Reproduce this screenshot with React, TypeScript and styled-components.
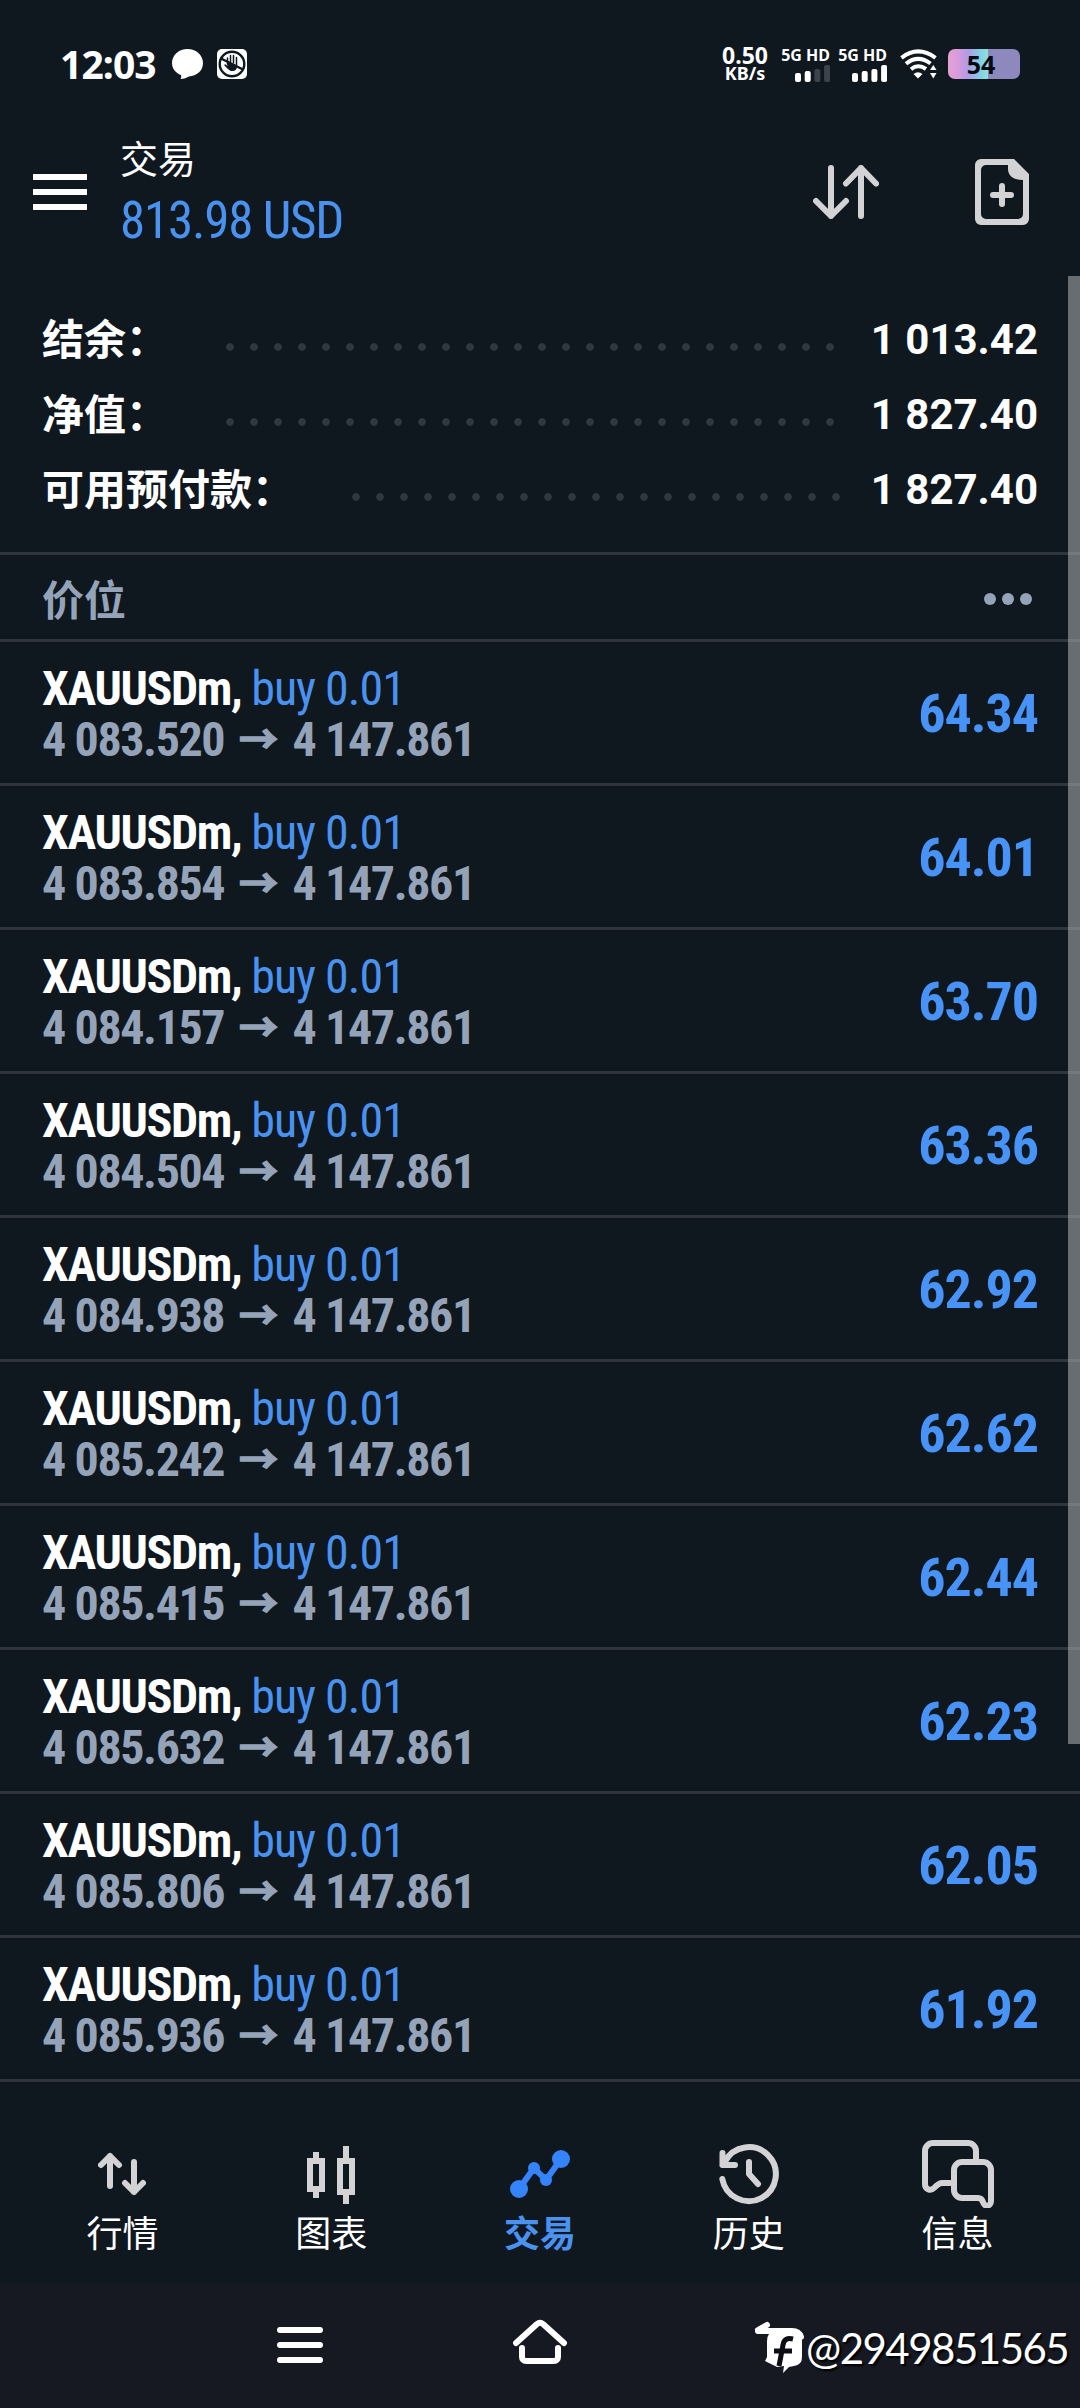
import React from 'react';
import styled, { createGlobalStyle } from 'styled-components';

const GlobalStyle = createGlobalStyle`
  * { box-sizing: border-box; }
  body {
    margin: 0;
    background: #0f171f;
    font-family: Roboto, "Noto Sans CJK SC", sans-serif;
    color: #fff;
  }
  svg { display: block; flex: none; }
`;

const Screen = styled.div`
  width: 1080px;
  height: 2408px;
  display: flex;
  flex-direction: column;
  overflow: hidden;
  background: #0f171f;
`;

const StatusBar = styled.div`
  height: 128px;
  padding: 0 60px 0 61px;
  display: flex;
  align-items: center;
  font-family: "Noto Sans", sans-serif;
`;

const Clock = styled.span`
  width: 111px;
  font-size: 39px;
  font-weight: 700;
  line-height: 56px;
  letter-spacing: -0.9px;
  margin-left: -1px;
  margin-right: 1px;
`;

const NoticeIcons = styled.div`
  display: flex;
  gap: 14px;
  flex: 1;
`;

const Speed = styled.div`
  width: 52px;
  margin-right: 2px;
  display: flex;
  flex-direction: column;
  align-items: center;
  font-weight: 700;
`;

const SpeedLine = styled.span<{ $size: number }>`
  font-size: ${(p) => p.$size}px;
  line-height: 18px;
`;

const Signal = styled.div`
  width: 48px;
  margin-left: 9px;
  display: flex;
  flex-direction: column;
  align-items: flex-end;
  gap: 1px;
  font-size: 16px;
  font-weight: 700;
  line-height: 17px;
  white-space: nowrap;
`;

const WifiSlot = styled.div`
  margin: 0 11px 0 13px;
`;

const Battery = styled.div`
  width: 72px;
  height: 30px;
  border-radius: 7px;
  padding-right: 6px;
  text-align: center;
  color: #060a12;
  font-size: 25px;
  font-weight: 700;
  line-height: 30px;
  background: linear-gradient(90deg, #e3a3cf 0, #dd9bdc 8px, #b09be6 20px, #84cfe2 32px, #8be3dc 40px, #8d89bd 40px);
`;

const Header = styled.header`
  height: 148px;
  padding: 0 51px 0 33px;
  display: flex;
  align-items: flex-start;
`;

const MenuButton = styled.div`
  width: 54px;
  margin-top: 46px;
  display: flex;
  flex-direction: column;
  gap: 9px;
`;

const MenuBar = styled.span`
  height: 6px;
  background: #fff;
`;

const Titles = styled.div`
  flex: 1;
  margin: 9px 0 0 33px;
`;

const Title = styled.div`
  font-size: 38px;
  line-height: 46px;
`;

const Profit = styled.div`
  margin-top: 7px;
  font-family: "Roboto Condensed", Roboto, sans-serif;
  font-stretch: 75%;
  font-size: 51px;
  line-height: 62px;
  letter-spacing: -1.2px;
  color: #4a92f0;
`;

const SortSlot = styled.div`
  margin: 37px 96px 0 0;
`;

const DocSlot = styled.div`
  margin-top: 31px;
`;

const Content = styled.main`
  position: relative;
  height: 1838px;
`;

const ScrollThumb = styled.div`
  position: absolute;
  top: 0;
  right: 0;
  width: 12px;
  height: 1468px;
  background: rgba(164, 166, 168, 0.6);
`;

const Summary = styled.section`
  height: 279px;
  padding: 26px 42px 0;
  border-bottom: 3px solid #2e353f;
`;

const SummaryRow = styled.div`
  height: 75px;
  display: flex;
  align-items: center;
  font-size: 42px;
  font-weight: 700;
`;

const Label = styled.span`
  margin-bottom: 6px;
`;

const Leader = styled.div`
  flex: 1;
  height: 8px;
  margin: 15px 23px 0 50px;
  background: radial-gradient(circle at 12px 4px, #2f3740 3.4px, transparent 4.2px) 0 0 / 24px 8px repeat-x;
`;

const SectionHead = styled.div`
  height: 87px;
  padding: 0 48px 0 42px;
  display: flex;
  align-items: center;
  justify-content: space-between;
  border-bottom: 3px solid #2e353f;
  color: #94a3b8;
  font-size: 42px;
  font-weight: 700;
`;

const More = styled.div`
  display: flex;
  gap: 6px;
  margin-top: 4px;
`;

const MoreDot = styled.span`
  width: 12px;
  height: 12px;
  border-radius: 50%;
  background: #94a3b8;
`;

const PositionRow = styled.div`
  height: 144px;
  padding: 21px 42px 0;
  display: flex;
  justify-content: space-between;
  border-bottom: 3px solid #2e353f;
  font-family: "Roboto Condensed", Roboto, sans-serif;
  font-stretch: 75%;
`;

const Line = styled.div`
  height: 51px;
  line-height: 51px;
  font-size: 48px;
  font-weight: 700;
  letter-spacing: -1.35px;
  white-space: nowrap;
`;

const Side = styled.span`
  font-weight: 400;
  letter-spacing: -1px;
  color: #4a92f0;
`;

const Prices = styled(Line)`
  letter-spacing: -1.4px;
  color: #94a3b8;
`;

const Arrow = styled.span`
  margin: 0 5px;
  font-family: "Noto Sans CJK SC", sans-serif;
  font-size: 39px;
  line-height: 0;
  letter-spacing: 0;
  vertical-align: 3px;
  -webkit-text-stroke: 1.5px #94a3b8;
`;

const Gain = styled.div`
  font-size: 54px;
  font-weight: 700;
  line-height: 101px;
  letter-spacing: -1px;
  color: #4793f8;
`;

const TabBar = styled.nav`
  height: 169px;
  padding: 26px 18px 0;
  display: flex;
`;

const Tab = styled.div<{ $active?: boolean }>`
  flex: 1;
  display: flex;
  flex-direction: column;
  align-items: center;
  gap: 4px;
  font-size: 36px;
  line-height: 46px;
  font-weight: ${(p) => (p.$active ? 700 : 400)};
  color: ${(p) => (p.$active ? '#4a92f0' : '#fff')};
`;

const SystemBar = styled.div`
  flex: 1;
  padding: 32px 0 0 277px;
  display: flex;
  align-items: flex-start;
  background: #171922;
`;

const Recents = styled.div`
  flex: none;
  width: 46px;
  margin: 12px 190px 0 0;
  display: flex;
  flex-direction: column;
  gap: 9px;
`;

const RecentsBar = styled.span`
  height: 6px;
  border-radius: 3px;
  background: #fff;
`;

const BadgeSlot = styled.div`
  margin: 4px 0 0 185px;
`;

const Handle = styled.span`
  margin-top: 7px;
  font-family: Lato, sans-serif;
  font-size: 42px;
  line-height: 52px;
  letter-spacing: -1.5px;
  text-shadow: 2px 2px 2px #000;
`;

const summary = [
  { label: '结余：', value: '1 013.42' },
  { label: '净值：', value: '1 827.40' },
  { label: '可用预付款：', value: '1 827.40' },
];

const positions = [
  { open: '4 083.520', gain: '64.34' },
  { open: '4 083.854', gain: '64.01' },
  { open: '4 084.157', gain: '63.70' },
  { open: '4 084.504', gain: '63.36' },
  { open: '4 084.938', gain: '62.92' },
  { open: '4 085.242', gain: '62.62' },
  { open: '4 085.415', gain: '62.44' },
  { open: '4 085.632', gain: '62.23' },
  { open: '4 085.806', gain: '62.05' },
  { open: '4 085.936', gain: '61.92' },
];

const line = {
  fill: 'none',
  stroke: '#d3d3d5',
  strokeWidth: 6,
  strokeLinecap: 'round' as const,
  strokeLinejoin: 'round' as const,
};

const ChatIcon = () => (
  <svg width="31" height="30" viewBox="0 0 31 30">
    <path d="M15.500 0C24 0 31 6 31 14s-6.500 13-14 13.500c-2 1-5 2.500-8.500 2.500.5-1 1-2.500.5-4C3.500 24 0 19.500 0 14 0 6 7 0 15.500 0Z" fill="#fff" />
  </svg>
);

const HandIcon = () => (
  <svg width="30" height="30" viewBox="0 0 30 30">
    <rect width="30" height="30" rx="5" fill="#fff" />
    <circle cx="15" cy="15" r="12.300" fill="none" stroke="#0f171f" strokeWidth="2.400" />
    <path d="M10.500 15V9M13.500 14V6.500M16.500 14V6.500M19.500 16V8.500" fill="none" stroke="#0f171f" strokeWidth="1.500" strokeLinecap="round" />
    <path d="M10 13l10 4.500c0 3-2 4.500-4.500 4.500-3 0-4.500-2-8.500-6 1.500-1 2.500 0 3.500 1Z" fill="#0f171f" />
    <path d="M4 9.500l22 11" stroke="#0f171f" strokeWidth="2.400" />
  </svg>
);

const Bars = ({ level }: { level: number }) => (
  <svg width="35" height="17" viewBox="0 0 35 17">
    {[9, 11, 13, 17].map((h, i) => (
      <rect key={h} x={i * 9.7} y={17 - h} width="6" height={h} rx="2" fill={i < level ? '#fff' : '#3c434b'} />
    ))}
  </svg>
);

const WifiIcon = () => (
  <svg width="37" height="30" viewBox="0 0 37 30">
    <g fill="none" stroke="#fff" strokeWidth="4">
      <path d="M1.500 8.800Q18 -4 35.500 8.800" />
      <path d="M6 14.800Q18 5 30.500 14.500" />
      <path d="M11 20.300Q18 14.500 26 20" />
    </g>
    <path d="M13.500 25q4.500-3.500 9 0l-4.500 4.500Z" fill="#fff" />
    <path d="M30 21l3.300-5 3.200 5ZM30 24h6.500l-3.200 5.500Z" fill="#fff" />
  </svg>
);

const SortIcon = () => (
  <svg width="66" height="54" viewBox="0 0 66 54">
    <path {...line} d="M18 3V51M3 36L18 51L33 36M48 51V3M33 18.500L48 3L63 18.500" />
  </svg>
);

const NewOrderIcon = () => (
  <svg width="54" height="66" viewBox="0 0 54 66">
    <path
      fillRule="evenodd"
      fill="#d3d3d5"
      d="M6 0H39L54 15V60a6 6 0 0 1-6 6H6a6 6 0 0 1-6-6V6a6 6 0 0 1 6-6ZM11 6a5 5 0 0 0-5 5V55a5 5 0 0 0 5 5H43a5 5 0 0 0 5-5V21C39 21 33 17 33 10V6Z"
    />
    <path {...line} d="M27 27V45M18 36H36" />
  </svg>
);

const QuotesIcon = () => (
  <svg width="48" height="68" viewBox="0 0 48 68">
    <path {...line} d="M12 46V16M3 25L12 16L21 25M36 22V52M27 43L36 52L45 43" />
  </svg>
);

const ChartIcon = () => (
  <svg width="48" height="68" viewBox="0 0 48 68">
    <g {...line} strokeLinecap="butt" strokeLinejoin="miter">
      <path d="M3 21H15V49H3ZM9 12V18M9 52V58" />
      <path d="M33 21H45V52H33ZM39 6V18M39 55V64" />
    </g>
  </svg>
);

const TradeIcon = () => (
  <svg width="60" height="68" viewBox="0 0 60 68">
    <path {...line} stroke="#3584fb" d="M9 49L24 28L36 40L51 19" />
    <g fill="#3584fb">
      <circle cx="9" cy="49" r="9" />
      <circle cx="24" cy="28" r="6" />
      <circle cx="36" cy="40" r="6" />
      <circle cx="51" cy="19" r="9" />
    </g>
  </svg>
);

const HistoryIcon = () => (
  <svg width="60" height="68" viewBox="0 0 60 68">
    <path {...line} d="M3.300 39A27 27 0 1 0 6 21.500L3.500 25H16M3.500 13V25M30 22V34L39 44" />
  </svg>
);

const MessagesIcon = () => (
  <svg width="72" height="68" viewBox="0 0 72 68">
    <g {...line}>
      <path d="M54 19V11a8 8 0 0 0-8-8H11a8 8 0 0 0-8 8V44C3 50 9 51 12 48C15 45 17 43 20 43H28" />
      <path d="M41 22H61a8 8 0 0 1 8 8V61C69 67 62 67 61 62C60 59 58 58 56 58H40a8 8 0 0 1-8-8V30a8 8 0 0 1 8-8Z" />
    </g>
  </svg>
);

const HomeIcon = () => (
  <svg width="54" height="50" viewBox="0 0 54 50">
    <g {...line} stroke="#fff">
      <path d="M3 28L24 9Q27 6.500 30 9L51 28" />
      <path d="M9 33V42a4 4 0 0 0 4 4H41a4 4 0 0 0 4-4V33" />
    </g>
  </svg>
);

const BadgeIcon = () => (
  <svg width="54" height="54" viewBox="0 0 54 54">
    <path d="M6 11L15 6" stroke="#fff" strokeWidth="6" strokeLinecap="round" />
    <path d="M6 12H40Q47 12 49 18" fill="none" stroke="#fff" strokeWidth="6" strokeLinecap="round" />
    <path d="M23 12H41Q50 13 50 22V38Q50 46 42 47L37 48L31 54L32 47L25 48L13 42L15 38V22Q15 13 23 12Z" fill="#fff" />
    <path d="M41 20Q32 18 31 26L27 47M22 32H40" fill="none" stroke="#0c0e14" strokeWidth="5" />
  </svg>
);

const tabs = [
  { label: '行情', icon: <QuotesIcon /> },
  { label: '图表', icon: <ChartIcon /> },
  { label: '交易', icon: <TradeIcon />, active: true },
  { label: '历史', icon: <HistoryIcon /> },
  { label: '信息', icon: <MessagesIcon /> },
];

const App: React.FC = () => (
  <Screen>
    <GlobalStyle />
    <StatusBar>
      <Clock>12:03</Clock>
      <NoticeIcons>
        <ChatIcon />
        <HandIcon />
      </NoticeIcons>
      <Speed>
        <SpeedLine $size={23}>0.50</SpeedLine>
        <SpeedLine $size={18}>KB/s</SpeedLine>
      </Speed>
      <Signal>
        5G HD
        <Bars level={2} />
      </Signal>
      <Signal>
        5G HD
        <Bars level={4} />
      </Signal>
      <WifiSlot>
        <WifiIcon />
      </WifiSlot>
      <Battery>54</Battery>
    </StatusBar>
    <Header>
      <MenuButton>
        <MenuBar />
        <MenuBar />
        <MenuBar />
      </MenuButton>
      <Titles>
        <Title>交易</Title>
        <Profit>813.98 USD</Profit>
      </Titles>
      <SortSlot>
        <SortIcon />
      </SortSlot>
      <DocSlot>
        <NewOrderIcon />
      </DocSlot>
    </Header>
    <Content>
      <Summary>
        {summary.map((s) => (
          <SummaryRow key={s.label}>
            <Label>{s.label}</Label>
            <Leader />
            {s.value}
          </SummaryRow>
        ))}
      </Summary>
      <SectionHead>
        价位
        <More>
          <MoreDot />
          <MoreDot />
          <MoreDot />
        </More>
      </SectionHead>
      {positions.map((p) => (
        <PositionRow key={p.open}>
          <div>
            <Line>
              XAUUSDm, <Side>buy 0.01</Side>
            </Line>
            <Prices>
              {p.open} <Arrow>→</Arrow> 4 147.861
            </Prices>
          </div>
          <Gain>{p.gain}</Gain>
        </PositionRow>
      ))}
      <ScrollThumb />
    </Content>
    <TabBar>
      {tabs.map((t) => (
        <Tab key={t.label} $active={t.active}>
          {t.icon}
          {t.label}
        </Tab>
      ))}
    </TabBar>
    <SystemBar>
      <Recents>
        <RecentsBar />
        <RecentsBar />
        <RecentsBar />
      </Recents>
      <HomeIcon />
      <BadgeSlot>
        <BadgeIcon />
      </BadgeSlot>
      <Handle>@2949851565</Handle>
    </SystemBar>
  </Screen>
);

export default App;
